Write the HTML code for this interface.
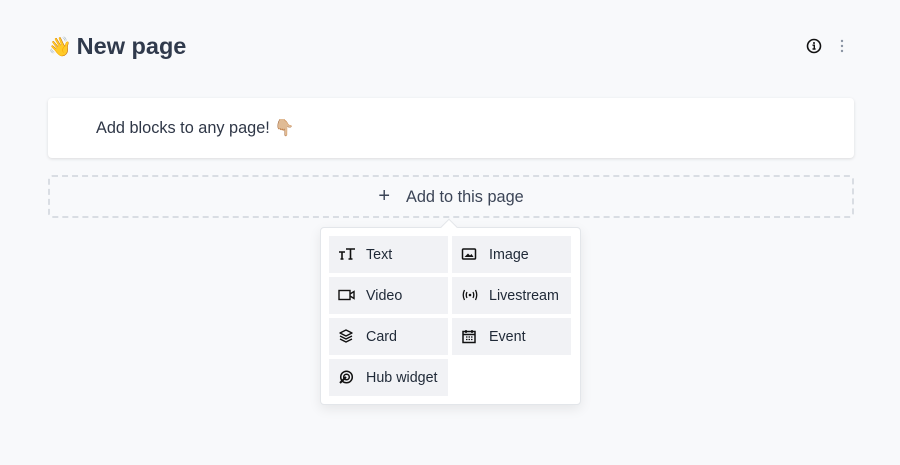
<!DOCTYPE html>
<html><head><meta charset="utf-8"><style>
*{box-sizing:border-box;margin:0;padding:0}
body{width:900px;height:465px;background:#f8f9fb;font-family:"Liberation Sans",sans-serif;color:#334155;position:relative;overflow:hidden}
.title{position:absolute;left:48px;top:33px;font-size:23.5px;font-weight:bold;color:#303a4c;display:flex;align-items:center;gap:5px}
.card{position:absolute;left:48px;top:98px;width:806px;height:60px;background:#fff;border-radius:4px;box-shadow:0 1px 3px rgba(0,0,0,.12);font-size:16.3px;padding-left:48px;line-height:60px;color:#2f3747}
.add{position:absolute;left:48px;top:175px;width:806px;height:43px;border:2px dashed #d9dde3;border-radius:4px;text-align:center;line-height:39px;font-size:16.3px;color:#3c4557}
.menu{position:absolute;left:320px;top:227px;width:261px;height:178px;background:#fff;border:1px solid #e3e6ea;border-radius:4px;box-shadow:0 4px 12px rgba(0,0,0,.08)}
.arrow{position:absolute;left:443px;top:221px;width:12px;height:12px;background:#fff;transform:rotate(45deg);border-left:1px solid #e3e6ea;border-top:1px solid #e3e6ea}
.item{position:absolute;width:119px;height:37px;background:#f1f2f5;font-size:14.3px;color:#1f2937;line-height:38px;padding-left:37px}
.item svg{position:absolute;left:9px;top:11px}
</style></head><body>
<div class="title"><span style="font-size:19px">👋</span>New page</div>
<svg style="position:absolute;left:806px;top:38px" width="16" height="16" viewBox="0 0 16 16"><circle cx="8" cy="8" r="6.5" fill="none" stroke="#111" stroke-width="1.6"/><circle cx="8" cy="5" r="1" fill="#111"/><path d="M6.5 7.2H8.3V11M6.5 11H9.6" stroke="#111" stroke-width="1.4" fill="none"/></svg>
<svg style="position:absolute;left:839px;top:39px" width="6" height="14"><circle cx="3" cy="2" r="1.2" fill="#8a94a3"/><circle cx="3" cy="7" r="1.2" fill="#8a94a3"/><circle cx="3" cy="12" r="1.2" fill="#8a94a3"/></svg>
<div class="card">Add blocks to any page! 👇🏼</div>
<div class="add"><span style="font-size:20px;margin-right:16px">+</span>Add to this page</div>
<div class="menu"></div>
<div class="arrow"></div>
<div class="item" style="left:329px;top:236px"><svg width="18" height="14" viewBox="0 0 18 14"><path d="M1 5H7M4 5V12M8 2H17M12.5 2V12M10.5 12H14.5M2.5 12H5.5" stroke="#111" stroke-width="1.6" fill="none"/></svg>Text</div>
<div class="item" style="left:452px;top:236px"><svg width="16" height="14" viewBox="0 0 16 14"><rect x="1.5" y="2" width="13" height="10" rx="1" fill="none" stroke="#111" stroke-width="1.5"/><path d="M3.5 10L7 6.5L9 8.5L10.5 7L12.5 10Z" fill="#111"/></svg>Image</div>
<div class="item" style="left:329px;top:277px"><svg width="18" height="14" viewBox="0 0 18 14"><rect x="1" y="2.5" width="11" height="9" fill="none" stroke="#111" stroke-width="1.4"/><path d="M12 6L16 3.5V10.5L12 8" fill="none" stroke="#111" stroke-width="1.4"/></svg>Video</div>
<div class="item" style="left:452px;top:277px"><svg width="18" height="14" viewBox="0 0 18 14"><circle cx="9" cy="7" r="1.3" fill="#111"/><path d="M6 4Q4.5 7 6 10M12 4Q13.5 7 12 10M3.5 2Q1 7 3.5 12M14.5 2Q17 7 14.5 12" stroke="#111" stroke-width="1.3" fill="none"/></svg>Livestream</div>
<div class="item" style="left:329px;top:318px"><svg width="16" height="14" viewBox="0 0 16 14"><path d="M8 1L14 4L8 7L2 4Z M2 7L8 10L14 7 M2 10L8 13L14 10" stroke="#111" stroke-width="1.4" fill="none" stroke-linejoin="round"/></svg>Card</div>
<div class="item" style="left:452px;top:318px"><svg width="16" height="15" viewBox="0 0 16 15"><rect x="2" y="2.5" width="12" height="11" fill="none" stroke="#111" stroke-width="1.5"/><path d="M2 5.5H14M5 1V4M11 1V4" stroke="#111" stroke-width="1.5"/><path d="M5 8h1.5M7.5 8h1.5M10 8h1.5M5 10.5h1.5M7.5 10.5h1.5M10 10.5h1.5" stroke="#111" stroke-width="1.3"/></svg>Event</div>
<div class="item" style="left:329px;top:359px"><svg width="16" height="15" viewBox="0 0 16 15"><circle cx="8.5" cy="7" r="5.8" fill="none" stroke="#111" stroke-width="1.5"/><circle cx="8.5" cy="7" r="2.8" fill="none" stroke="#111" stroke-width="1.5"/><path d="M8 7L2 13" stroke="#111" stroke-width="2"/></svg>Hub widget</div>
</body></html>
